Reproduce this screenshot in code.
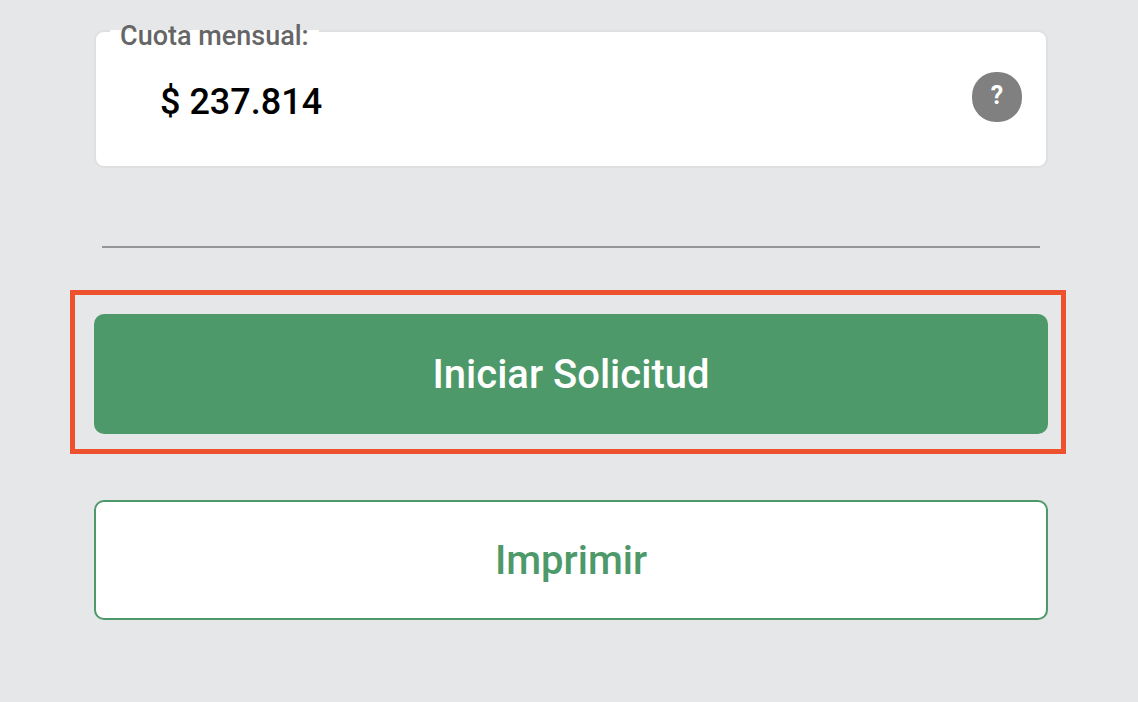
<main>
  <section class="quote">
    <label for="monthly-payment">Cuota mensual:</label>
    <div class="value">
      <output class="amount" id="monthly-payment">$ 237.814</output>
      <button class="help" type="button" aria-label="Ayuda">?</button>
    </div>
  </section>
  <hr />
  <div class="highlight">
    <button class="action primary" type="button">Iniciar Solicitud</button>
  </div>
  <button class="action secondary" type="button">Imprimir</button>
</main>

<style>
  :global(body) {
    background: #e5e7e9;
    font-family: Roboto, sans-serif;
  }
  main {
    display: flex;
    flex-direction: column;
    padding: 30px 90px 82px 94px;
  }
  .quote {
    display: flex;
    flex-direction: column;
    border: 2px solid #dfe0e2;
    border-radius: 10px;
    background: #fff;
  }
  /* The label's short line box covers the top border while its text rises above it. */
  label {
    align-self: flex-start;
    margin: -2px 0 0 14px;
    padding: 0 10px;
    background: #fff;
    color: #666;
    font-size: 27px;
    font-weight: 500;
    line-height: 12px;
  }
  .value {
    display: flex;
    align-items: flex-start;
    justify-content: space-between;
    padding: 30px 24px 42px 64px;
  }
  .amount {
    padding-top: 8px;
    font-size: 36px;
    font-weight: 500;
    line-height: 44px;
  }
  .help {
    width: 50px;
    height: 50px;
    padding: 0 0 4px;
    border: 0;
    border-radius: 24px;
    background: #808080;
    color: #fff;
    font: 700 25px/1 Roboto, sans-serif;
  }
  hr {
    width: calc(100% - 16px);
    height: 2px;
    margin: 78px auto 42px;
    border: 0;
    background: #939598;
  }
  .highlight {
    margin: 0 -18px 46px -24px;
    padding: 19px 13px 15px 19px;
    border: 5px solid #ed512d;
  }
  .action {
    display: block;
    width: 100%;
    height: 120px;
    padding: 2px 0 0;
    border-radius: 10px;
    font: 500 40px/1 Roboto, sans-serif;
  }
  .primary {
    border: 0;
    background: #4d9969;
    color: #fff;
  }
  .secondary {
    border: 2px solid #4d9969;
    background: #fff;
    color: #4d9969;
  }
</style>
